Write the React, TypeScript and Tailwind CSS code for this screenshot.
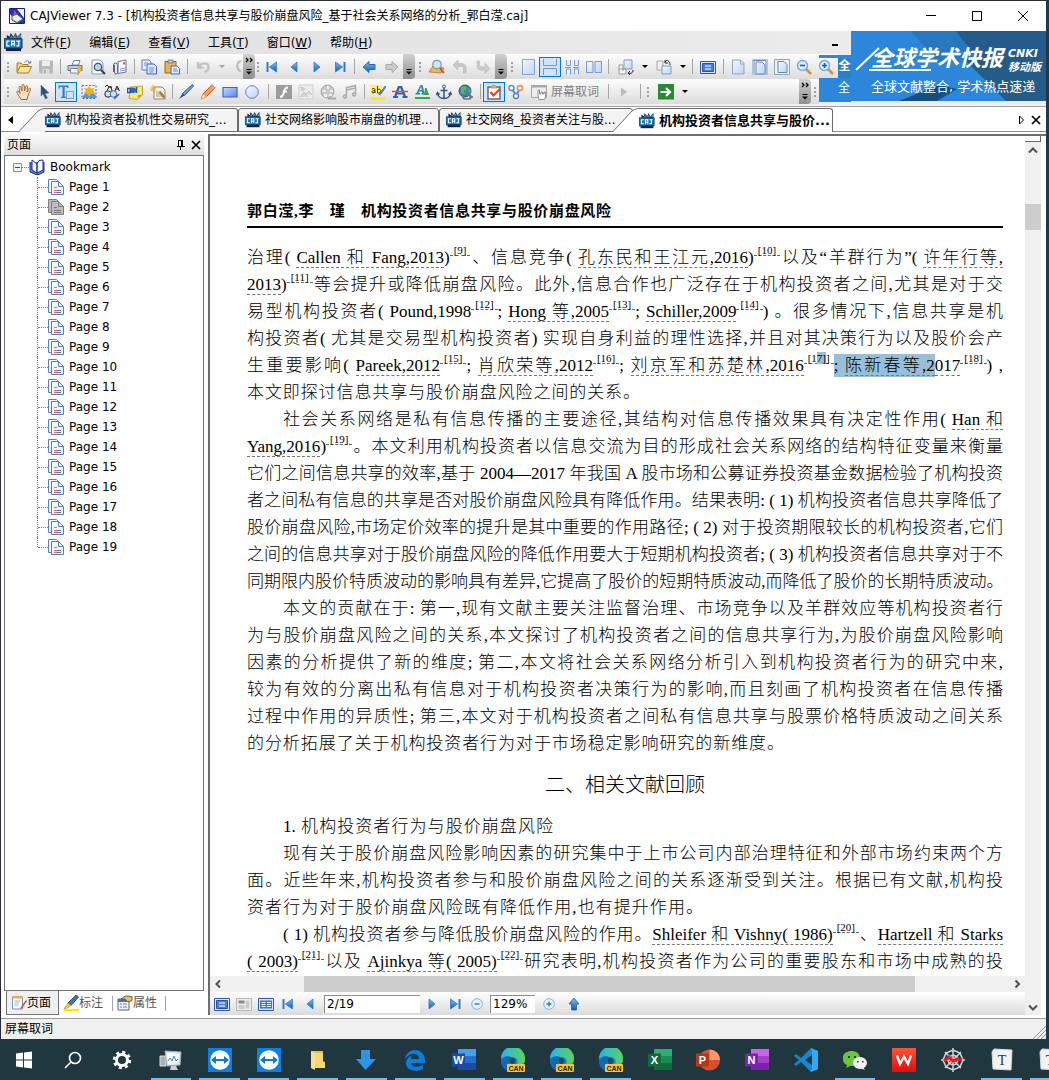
import React, { ReactNode } from "react";

const uiFont = "font-['DejaVu_Sans','Noto_Sans_CJK_SC',sans-serif]";

/* ---------- icon drawings, 16 x 16 grid ---------- */

const art: Record<string, ReactNode> = {
  open: (
    <>
      <path d="M1 13V4h4l1.500 1.500H12V8" fill="#f3cf73" stroke="#a87a2a" />
      <path d="M1 14 4 7.500h11.500L12.500 14z" fill="#fbe39a" stroke="#a87a2a" />
      <path d="M8.500 3.500C10 1 13 1.500 14 4M12 3.500l2.200 1 .9-2.300" fill="none" stroke="#5b7fae" />
    </>
  ),
  save: (
    <>
      <path d="M1 1.500h14v13H2.500L1 13z" fill="#b9b9b9" />
      <path d="M4 2h8v5H4z" fill="#eee" />
      <path d="M4.500 10h7v4.500h-7z" fill="#dcdcdc" />
      <path d="M6 11h2v3H6z" fill="#aaa" />
    </>
  ),
  print: (
    <>
      <path d="M5 6 7 1.500h6L11.500 6z" fill="#fff" stroke="#6c83ad" />
      <path d="M1 6.500h14v5H1z" fill="#c5cbd9" stroke="#65718b" />
      <path d="M3.500 9.500h8V14h-8z" fill="#f4f7fc" stroke="#7f8ba5" />
      <path d="m13 7-3 5h2l-1.500 4L15 10.500h-2.200L15 7z" fill="#ffce33" stroke="#b8861a" strokeWidth=".6" />
    </>
  ),
  preview: (
    <>
      <path d="M2 1h8l3 3v11H2z" fill="#f7faff" stroke="#8b9cb9" />
      <circle cx="8" cy="8" r="3.700" fill="#b5d6ee" stroke="#435069" strokeWidth="1.300" />
      <path d="m11 11 4 4" stroke="#383f4d" strokeWidth="2.200" />
    </>
  ),
  mail: (
    <>
      <path d="M1.500 13V6a2 2 0 0 1 4 0v7.500a1.500 1.500 0 0 1-3 0V6" fill="none" stroke="#59647b" />
      <path d="M6 2.500 14 1v12l-8 1.500z" fill="#f4f7fb" stroke="#66799c" />
      <path d="m8 10 6.500-1M8 12l6-1" stroke="#8da0c0" />
      <path d="M11 3h2v2.500h-2z" fill="#e06a4d" />
    </>
  ),
  copy: (
    <>
      <path d="M1 1h7l2 2v8H1z" fill="#e9f1ff" stroke="#5b7ac4" />
      <path d="M6 5h7l2.500 2.500V15H6z" fill="#dce8ff" stroke="#3c62bd" />
      <path d="M3 4h4M3 6h2M8 9h5M8 11h5M8 13h4" stroke="#6a8ad2" />
    </>
  ),
  paste: (
    <>
      <path d="M1 2.500h11V14H1z" fill="#e6b455" stroke="#93682a" />
      <path d="M4 1h5v3H4z" fill="#c4c7cf" stroke="#666" strokeWidth=".7" />
      <path d="M7 7h6l2.500 2.500V15H7z" fill="#e2ecff" stroke="#4a69ae" />
      <path d="M9 10h4M9 12h5" stroke="#6a8ad2" />
    </>
  ),
  undo: <path d="M2 3v5.500h5.500M2.500 8C5 3.500 12 3 12.500 7.500 13 10 11 12 8.500 13" fill="none" stroke="#c2c2c2" strokeWidth="2.400" />,
  redoArc: <path d="M14 2C9 3 9 10 14 12.500" fill="none" stroke="#b8b8b8" strokeWidth="2" />,
  first: (
    <>
      <path d="M2.500 3h2v10h-2z" fill="#2f7bd0" />
      <path d="M12.500 3v10L5.500 8z" fill="url(#blue)" stroke="#2f78cc" strokeWidth=".8" />
    </>
  ),
  prev: <path d="M11 3v10L5 8z" fill="url(#blue)" stroke="#2f78cc" strokeWidth=".8" />,
  next: <path d="M5 3v10l6-5z" fill="url(#blue)" stroke="#2f78cc" strokeWidth=".8" />,
  last: (
    <>
      <path d="M11.500 3h2v10h-2z" fill="#2f7bd0" />
      <path d="M3.500 3v10l7-5z" fill="url(#blue)" stroke="#2f78cc" strokeWidth=".8" />
    </>
  ),
  back: <path d="M8 2.500v3h6v5H8v3L2 8z" fill="url(#blue)" stroke="#2767b7" />,
  forward: <path d="M8 2.500v3H2v5h6v3L14 8z" fill="#ccc" stroke="#aaa" />,
  up: <path d="M8 2 3 8h2.500v6h5V8H13z" fill="url(#blue)" stroke="#1e5cac" strokeWidth=".8" />,
  search: (
    <>
      <path d="M0 13 4 7l11 2-3 5z" fill="#f2b64b" stroke="#a66c20" strokeWidth=".7" />
      <circle cx="8" cy="5.500" r="4.200" fill="#cfe8f8" stroke="#7f9cc0" strokeWidth="1.300" />
      <path d="m11 9 4 5" stroke="#d4492d" strokeWidth="2" />
    </>
  ),
  turnLeft: <path d="M6 1v3.500h3.500A4.500 4.500 0 0 1 14 9v5h-2.500V9.500a2 2 0 0 0-2-2H6V11L1 6z" fill="#c9c9c9" stroke="#adadad" strokeWidth=".5" />,
  turnRight: <path d="M2 2h2.500v4a2 2 0 0 0 2 2H10V4.500l5 5-5 5V11H6A4 4 0 0 1 2 7z" fill="#cdcdcd" stroke="#adadad" strokeWidth=".5" />,
  onePage: <path d="M2.500.5h12v15h-12z" fill="url(#pane)" stroke="#88a4d2" />,
  rows: (
    <>
      <path d="M2 0h12v6H2zM2 10h12v6H2z" fill="#d3e3fa" />
      <path d="M1.500 0v6.500h13V0M1.500 16V9.500h13V16" fill="none" stroke="#7897cb" />
    </>
  ),
  four: (
    <>
      <path d="M2 1h5v6H2zM10 1h5v6h-5zM2 9.500h5v6H2zM10 9.500h5v6h-5z" fill="#e7effb" />
      <path d="M2.500 1v5.500h4V1M10.500 1v5.500h4V1M2.500 15.500v-5.500h4v5.500M10.500 15.500v-5.500h4v5.500M1 8.500h6M9 8.500h6" fill="none" stroke="#7d9bce" />
    </>
  ),
  two: <path d="M.5 2.500h6.500v11H.5zM9 2.500h6.500v11H9z" fill="url(#pane)" stroke="#7d9bce" />,
  rotateA: (
    <>
      <path d="M6 1h8v9H6z" fill="url(#pane)" stroke="#7d9bce" />
      <path d="M1 10V6h4v6M1 10h7v5H1z" fill="#f4f4f4" stroke="#999" />
      <path d="M15 11c0 3-2 4-5 3m2-2-2 2 2 2" fill="none" stroke="#222" />
    </>
  ),
  rotateB: (
    <>
      <path d="M1 2h6v9H1z" fill="#eee" stroke="#aaa" />
      <path d="M6 7h9v8H6z" fill="url(#pane)" stroke="#7d9bce" />
      <path d="M9 3c2-3 5-1 5 3M9 1v3h3" fill="none" stroke="#222" />
    </>
  ),
  screen: (
    <>
      <path d="M.5 2.500h15v12H.5z" fill="#dce7f8" stroke="#38569b" />
      <path d="M2.500 4.500h11v8h-11z" fill="#4c80df" stroke="#2b51a6" />
      <path d="M5 7h6M5 10h6" stroke="#fff" />
    </>
  ),
  screenGray: (
    <>
      <path d="M.5 2.500h15v12H.5z" fill="#eee" stroke="#b5b5b5" />
      <path d="M2.500 4.500h6v3h-6z" fill="#888" />
      <path d="M9.500 4.500h4v8h-4zM2.500 9h6v4h-6z" fill="#ccc" />
    </>
  ),
  screenTwo: (
    <>
      <path d="M.5 2.500h15v12H.5z" fill="#dce7f8" stroke="#38569b" />
      <path d="M2 4.500h12v8H2z" fill="#3f70d2" />
      <path d="M3.500 6.500h4M3.500 8.500h4M3.500 10.500h4M9 6.500h4M9 8.500h4M9 10.500h4" stroke="#fff" />
    </>
  ),
  doc: <path d="M2.500 1h8l3.500 3.500V15H2.500zM10.500 1v4H14" fill="url(#pane)" stroke="#8aa5d0" />,
  docFrame: (
    <>
      <path d="M.5.5h15v15H.5z" fill="#eef3fb" stroke="#b6c0d2" />
      <path d="M4 3h6l3 3v9H4zM2 1.500h12M2 1v14M14 1v14" fill="url(#pane)" stroke="#6b8bc2" />
    </>
  ),
  docFit: (
    <>
      <path d="M.5.500h15v15H.5z" fill="#edf2f7" stroke="#8da5c3" />
      <path d="M4 2.500h6l3 3v8H4z" fill="url(#pane)" stroke="#638c9c" />
    </>
  ),
  zoomOut: (
    <>
      <path d="m10 10 5 5" stroke="#de8d3a" strokeWidth="2.600" />
      <circle cx="6.500" cy="6.500" r="5" fill="#d6f0fb" stroke="#75a5dc" strokeWidth="1.400" />
      <path d="M4 6.500h5" stroke="#1b58b8" strokeWidth="1.600" />
    </>
  ),
  zoomIn: (
    <>
      <path d="m10 10 5 5" stroke="#de8d3a" strokeWidth="2.600" />
      <circle cx="6.500" cy="6.500" r="5" fill="#d6f0fb" stroke="#75a5dc" strokeWidth="1.400" />
      <path d="M4 6.500h5M6.500 4v5" stroke="#1b58b8" strokeWidth="1.600" />
    </>
  ),
  hand: (
    <path
      d="M5 15.500C3 12 1.500 10 .8 8c0-1.500 1.500-1.200 2.200 0l1 1.500L3 3.500C3 2 4.700 2 5 3.300L6 7V1.800C6-.1 8-.1 8.200 1.800L8.500 7l1.200-4.500c.5-1.500 2-1 1.800.5L11 8l1.800-3.300c1-1.200 2.200-.3 1.600 1.100L12 12l-1 3.500z"
      fill="#fbe0c0"
      stroke="#a5673a"
    />
  ),
  pointer: <path d="m4 1 8 8-4 .5 2.500 4.500-2 1-2.500-5L4 12z" fill="#2b5579" stroke="#4b779d" strokeWidth=".5" />,
  textSelect: (
    <>
      <path d="M.5 1.500h10V4H9.500l-.5-1H6.700v9.500l1.300.5v1H3v-1l1.500-.5V3H2l-.5 1.500h-1z" fill="#3c7bd0" />
      <path d="M8.500 7.500h7v7h-7z" fill="none" stroke="#2759a5" strokeDasharray="1 1" />
    </>
  ),
  picture: (
    <>
      <path d="M1 1.500h14v13H1z" fill="none" stroke="#3b70c1" strokeDasharray="2 1.500" />
      <path d="M2 12 6 7l3 3 3-2 3 4v2H2z" fill="#4a9ed4" />
      <path d="m8 2 1.500 2.500L13 4l-1 3 2 2.500-4 .5-2 3-1.500-3-4-.500L5 7 3 4l3.500.5z" fill="#f8ac22" />
    </>
  ),
  binoculars: (
    <>
      <circle cx="4" cy="10" r="3.200" fill="#cde3f3" stroke="#222" />
      <circle cx="9.500" cy="10" r="3.200" fill="#cde3f3" stroke="#4a6fb0" />
      <path d="M3 6.500 5 3h2l1 4M1 3l2-2 2 2h3M11 7l2-5 2.500 5M12 5h3" fill="none" stroke="#222" />
      <path d="m10 15 5-5" stroke="#2d5fb0" strokeWidth="1.500" />
    </>
  ),
  note: (
    <>
      <path d="M3 3 15.500 2v9l-5 4.500-8.500-1z" fill="#ffe872" stroke="#ae8b25" strokeWidth=".7" />
      <path d="m10.500 15 .5-4 4.500-.3z" fill="#caa32f" />
      <path d="M.5 4.500h3v4h-3zM3.500 6h4M9.500 3v6" fill="none" stroke="#2357ae" strokeWidth="1.500" />
      <path d="M4 3.500h3l2 1.500v3L7 9H4z" fill="#2866c0" />
    </>
  ),
  sheet: (
    <>
      <path d="M4 3h8l3 3v9H4z" fill="#f7f1e4" stroke="#8d8576" />
      <path d="M6 8h6M6 10h7M6 12h7" stroke="#af9c79" />
      <path d="M0 5h6M3 1v7M1 2.500l5 5M5 2 1 7" stroke="#f6aa1e" />
      <path d="m10 7 5 5-1 3-5-6z" fill="#b3743f" />
    </>
  ),
  pen: (
    <>
      <path d="m14.500.5 1 1.500-9 9.500-2-2z" fill="#6aabf5" stroke="#1d4fae" />
      <path d="m4.500 9.500 2 2L1 15z" fill="#264c90" />
    </>
  ),
  pencil: (
    <>
      <path d="m12 .8 3 3-9 9-4.500 2L3 10z" fill="#f4a05c" stroke="#b45420" />
      <path d="m3 10 3 3-4.500 2z" fill="#ffdfb0" />
      <path d="m12 1 3 3-1.500 1.500-3-3z" fill="#dfa393" />
    </>
  ),
  rectangle: <path d="M1 3.500h14v9.500H1z" fill="url(#pale)" stroke="#3c65d0" strokeWidth="1.200" />,
  circle: <circle cx="8" cy="8" r="6.300" fill="url(#pane)" stroke="#5d7ee3" />,
  flash: (
    <>
      <path d="M0 1h16v14H0z" fill="#9d9d9d" />
      <path d="M12 3.500C8 3.500 8.500 7 7.500 9.500 7 11.500 6 13 4 13M7.500 7.500H11" fill="none" stroke="#fff" strokeWidth="2" />
    </>
  ),
  image: (
    <>
      <path d="M1 1h14v14H1z" fill="#ececec" stroke="#cfcfcf" />
      <path d="m2 13 4-5 4 5M8 10l3-3 3 4M3 3l4 2-3 2z" fill="#d5d5d5" stroke="#c5c5c5" />
    </>
  ),
  film: (
    <>
      <circle cx="7.500" cy="7.500" r="6.500" fill="#c7c7c7" stroke="#a5a5a5" />
      <path d="M7 2h2v3H7zM2.500 6h3v2h-3zM10 6h3v2h-3zM4 10h3v3H4zM9 10h3v2H9z" fill="#eee" />
      <path d="M8 14.500h8" stroke="#aaa" strokeWidth="2" />
    </>
  ),
  music: (
    <path d="M4.500 12V3.500l9-2v9M4.500 6l9-2M1.500 12.500a1.500 1.500 0 1 0 3 0 1.500 1.500 0 1 0-3 0M10.500 10.500a1.500 1.500 0 1 0 3 0 1.500 1.500 0 1 0-3 0" fill="none" stroke="#aaa" strokeWidth="1.500" />
  ),
  highlight: (
    <>
      <path d="M0 1h12v9H0z" fill="#fff26c" />
      <path d="M.5 13h15v3H.5z" fill="#ffee00" />
      <path d="M2 5c2-1 3-.5 3 1v3M5 7C2 6 1 8.500 3 9l2-1M7.500 2v7M7.500 6c2-2 4 0 3 2s-2 1-3 1" fill="none" stroke="#333" />
      <path d="m15 2-5 7-1 2 2-1 5-7z" fill="#6a8fc5" stroke="#34547d" strokeWidth=".6" />
    </>
  ),
  strikeA: (
    <>
      <path d="M6 2h4l4 10h1.500v2h-5v-2h1l-.6-1.500H5.200L4.600 12H6v2H1v-2h1.200zM6 8.500h4L8 3.500z" fill="#2669ad" />
      <path d="M0 7.500h16" stroke="#e44" strokeWidth="1.500" />
    </>
  ),
  underlineA: (
    <>
      <path d="M6.500 1h2l2 8h1v1.500H7.500V9h1L8 7.500H5L4.500 9H6v1.500H1.500V9h1zM5.500 6H8L7 3z" fill="#298aac" />
      <path d="M11 4h1.500L15 11H9.500l1-2z" fill="#3b9e53" />
      <path d="M1 14h15" stroke="#2bad43" strokeWidth="2" />
    </>
  ),
  anchor: (
    <>
      <path d="M8 4v10M4.500 6.500h7M1.500 9c.5 3.500 3 5.500 6.500 5.500s6-2 6.500-5.500M.5 11l1-2.500 2 2M12.500 10.500l2-2 1 2.500" fill="none" stroke="#33597f" strokeWidth="1.500" />
      <circle cx="8" cy="2.500" r="1.500" fill="none" stroke="#33597f" />
    </>
  ),
  globe: (
    <>
      <circle cx="7" cy="7" r="6" fill="#3784c1" stroke="#31536e" />
      <path d="m3 3 4-1 2 2-3 3 1 4-4-2zM10 5l3 1-1 4z" fill="#69b54d" />
      <path d="M7 11h4a2 2 0 0 1 0 4H7a2 2 0 0 1 0-4M11 13h4" fill="none" stroke="#64717f" strokeWidth="1.500" />
    </>
  ),
  clipboard: (
    <>
      <path d="M2 3h12v12H2z" fill="#fff" stroke="#6c6486" strokeWidth="1.500" />
      <path d="M5 4c0-4 6-4 6 0z" fill="#f3b73d" stroke="#a2762b" strokeWidth=".6" />
      <path d="m4.500 8 3 3.500L14 5" fill="none" stroke="#d9421f" strokeWidth="2.200" />
    </>
  ),
  people: (
    <>
      <path d="m4 5 4 6 4-6" fill="none" stroke="#4a84cc" strokeWidth="2" />
      <circle cx="3.500" cy="4" r="2.500" fill="#fff" stroke="#648bd3" strokeWidth="1.500" />
      <circle cx="12" cy="4" r="2.500" fill="#fff" stroke="#e28a4c" strokeWidth="1.500" />
      <circle cx="8" cy="12" r="2.500" fill="#fff" stroke="#5688d4" strokeWidth="1.500" />
    </>
  ),
  grab: (
    <>
      <path d="M.5 1.500h15v12H.5z" fill="#eee" stroke="#a6a6a6" />
      <path d="M.5 2.500h15" stroke="#a6a6a6" strokeWidth="2" />
      <path d="M7 12V6h1.500v4H10V8h1.500v2H13V8h1.500v5l-1 2.500H8z" fill="#fff" stroke="#777" strokeWidth=".8" />
    </>
  ),
  playGray: <path d="M5 3.500v9l6-4.500z" fill="#bbb" />,
  go: (
    <>
      <path d="M0 0h16v15.500H0z" fill="#278b2f" />
      <path d="M2.500 8h9M8 4l4 4-4 4" fill="none" stroke="#fff" strokeWidth="2.200" />
    </>
  ),
  minus: (
    <>
      <circle cx="8" cy="8" r="5.300" fill="#e1f3fc" stroke="#87b4dc" />
      <path d="M5.500 8h5" stroke="#3f6eb6" strokeWidth="1.300" />
    </>
  ),
  plus: (
    <>
      <circle cx="8" cy="8" r="5.300" fill="#e1f3fc" stroke="#87b4dc" />
      <path d="M5.500 8h5M8 5.500v5" stroke="#3f6eb6" strokeWidth="1.300" />
    </>
  ),
  tabPage: (
    <>
      <path d="M1.500 2h10v12h-10z" fill="#f8fbff" stroke="#7696b8" />
      <path d="M1.500 1h10v2.500h-10z" fill="#efab4a" />
      <path d="M3.500 6h6M3.500 8h5M3.500 10h4" stroke="#a8b6c8" />
      <path d="m15 5-5 7-1 2.500 2-1.500 5-7z" fill="#d83e2f" />
    </>
  ),
  tabMark: (
    <>
      <path d="m13 0 2.500 2L8 10.500 5 8z" fill="#4873ae" stroke="#324d77" />
      <path d="m5 8 3 2.500-5 3-2 .5z" fill="#f8c530" stroke="#bd8a1c" strokeWidth=".7" />
      <path d="M1 15h15" stroke="#ffe500" strokeWidth="2.300" />
    </>
  ),
  tabProps: (
    <>
      <path d="M1 4h11v11H1z" fill="#eef4fc" stroke="#4a6794" />
      <path d="M1 5.500h11" stroke="#4a72b5" strokeWidth="3" />
      <path d="M3 9h2M6 9h4M3 12h2M6 12h4" stroke="#667ea4" />
      <path d="m4 4 4-3 7 .5v4L11 7 8 4z" fill="#e7c26d" stroke="#776129" />
    </>
  ),
};

function Icon({ name, className = "size-4" }: { name: string; className?: string }) {
  return (
    <svg viewBox="0 0 16 16" className={`${className} shrink-0`} aria-hidden="true">
      {art[name]}
    </svg>
  );
}

function CajLogo({ className }: { className: string }) {
  return (
    <svg viewBox="0 0 20 20" className={`${className} shrink-0`} aria-hidden="true">
      <path d="M3 6V2l3 2 1-4 3 4 2-4 2 4 4-4v7z" fill="#16203c" />
      <path d="m5 6 3-4 1 3 4-4v4l5-4v4z" fill="#4d84c4" />
      <path d="M2 14h16v5H2z" fill="#16203c" />
      <path d="M0 6h19v10H0z" fill="#1878a8" stroke="#123454" />
      <path d="M6 8.500H3v5h3M8 14v-5.500h3V14M8 11.500h3M13 8.500h4M15.500 8.500v5H13" fill="none" stroke="#fff" strokeWidth="1.300" />
    </svg>
  );
}

/* ---------- toolbar parts ---------- */

function Tool({ icon, w = "w-[22px]", label, active = false }: { icon: string; w?: string; label: string; active?: boolean }) {
  return (
    <button
      type="button"
      aria-label={label}
      className={`${w} flex h-5 shrink-0 items-center justify-center overflow-hidden ${active ? "bg-[#cde6f7] outline outline-1 -outline-offset-1 outline-[#0078d7]" : ""}`}
    >
      <Icon name={icon} />
    </button>
  );
}

const Sep = ({ w = "w-[6px]" }: { w?: string }) => (
  <span className={`${w} flex shrink-0 items-center justify-center`}>
    <span className="h-[15px] w-px bg-[#a5a5a5]" />
  </span>
);

const Grip = ({ w = "w-2" }: { w?: string }) => (
  <span className={`${w} flex shrink-0 flex-col items-center gap-[2px]`}>
    {[0, 1, 2].map((i) => (
      <span key={i} className="size-[2px] bg-[#9f9f9f]" />
    ))}
  </span>
);

const Caret = ({ w = "w-2", color = "border-t-black" }: { w?: string; color?: string }) => (
  <button type="button" aria-label="更多" className={`${w} flex shrink-0 justify-center`}>
    <span className={`border-x-[3px] border-t-[3px] border-x-transparent ${color}`} />
  </button>
);

function Overflow({ chevrons = false }: { chevrons?: boolean }) {
  return (
    <button type="button" aria-label="工具栏选项" className="flex h-[25px] w-3 shrink-0 flex-col items-center justify-end rounded-r-sm bg-linear-to-b from-[#d2d2d2] to-[#8f8f8f] pb-1">
      <svg viewBox="0 0 12 20" className="h-5 w-3">
        {chevrons && <path d="m3 3 2 2-2 2M7 3l2 2-2 2" fill="none" stroke="#000" strokeWidth="1.300" />}
        <path d="M3.500 14.500h5" stroke="#000" />
        <path d="M3 16.500h6l-3 3z" fill="#000" />
      </svg>
    </button>
  );
}

const barRow = "flex h-[25px] items-center bg-linear-to-b from-[#fdfdfd] to-[#dcdcdc]";

function Toolbars() {
  return (
    <div className="shrink-0 bg-[#ededed] pl-[3px]">
      <div className={`${barRow} w-[834px]`}>
        <Grip />
        <Tool icon="open" w="w-[23px]" label="打开" />
        <Tool icon="save" label="保存" />
        <Sep />
        <Tool icon="print" w="w-6" label="打印" />
        <Tool icon="preview" label="打印预览" />
        <Tool icon="mail" label="发送" />
        <Sep />
        <Tool icon="copy" w="w-6" label="复制" />
        <Tool icon="paste" label="粘贴" />
        <Sep w="w-2" />
        <Tool icon="undo" w="w-[26px]" label="撤销" />
        <Caret w="w-[10px]" color="border-t-[#a0a0a0]" />
        <Tool icon="redoArc" w="w-4" label="重做" />
        <Overflow chevrons />
        <Grip w="w-[6px]" />
        <Tool icon="first" label="首页" />
        <Tool icon="prev" label="上一页" />
        <Tool icon="next" w="w-6" label="下一页" />
        <Tool icon="last" label="末页" />
        <Sep />
        <Tool icon="back" w="w-6" label="后退" />
        <Tool icon="forward" label="前进" />
        <Overflow />
        <Grip w="w-[10px]" />
        <Tool icon="search" w="w-6" label="搜索" />
        <Tool icon="turnLeft" label="向左" />
        <Tool icon="turnRight" w="w-6" label="向右" />
        <Overflow />
        <Grip w="w-[10px]" />
        <Tool icon="onePage" label="单页" />
        <Tool icon="rows" label="连续" active />
        <Tool icon="four" label="连续对开" />
        <Tool icon="two" label="对开" />
        <Sep />
        <Tool icon="rotateA" w="w-[30px]" label="旋转" />
        <Caret />
        <Tool icon="rotateB" w="w-[30px]" label="旋转全部" />
        <Caret />
        <Sep w="w-[10px]" />
        <Tool icon="screen" label="全屏" />
        <Sep w="w-2" />
        <Tool icon="doc" label="实际大小" />
        <Tool icon="docFrame" label="适合宽度" />
        <Tool icon="docFit" label="适合页面" />
        <Tool icon="zoomOut" label="缩小" />
        <Tool icon="zoomIn" label="放大" />
      </div>
      <div className={`${barRow} w-[815px]`}>
        <Grip />
        <Tool icon="hand" w="w-[23px]" label="手形工具" />
        <Tool icon="pointer" w="w-5" label="选择" />
        <Tool icon="textSelect" label="选择文本" active />
        <Tool icon="picture" w="w-6" label="选择图像" />
        <Tool icon="binoculars" label="文字识别" />
        <Tool icon="note" w="w-[23px]" label="注释" />
        <Tool icon="sheet" w="w-[23px]" label="便笺" />
        <Sep />
        <Tool icon="pen" label="直线" />
        <Tool icon="pencil" label="曲线" />
        <Tool icon="rectangle" label="矩形" />
        <Tool icon="circle" label="椭圆" />
        <Sep w="w-[10px]" />
        <Tool icon="flash" label="动画" />
        <Tool icon="image" label="图片" />
        <Tool icon="film" label="视频" />
        <Tool icon="music" label="音频" />
        <Sep />
        <Tool icon="highlight" label="高亮" />
        <Tool icon="strikeA" label="删除线" />
        <Tool icon="underlineA" label="下划线" />
        <Tool icon="anchor" label="书签" />
        <Tool icon="globe" label="链接" />
        <Sep />
        <Tool icon="clipboard" label="审阅" active />
        <Tool icon="people" label="共享" />
        <button type="button" className="flex w-[76px] shrink-0 items-center gap-1 pl-1 text-xs whitespace-nowrap text-[#7e7e7e]">
          <Icon name="grab" />
          屏幕取词
        </button>
        <Sep w="w-[10px]" />
        <Tool icon="playGray" label="播放" />
        <Sep w="w-[10px]" />
        <Grip w="w-[6px]" />
        <Tool icon="go" w="w-[30px]" label="转到" />
        <Caret />
        <span className="flex-1" />
        <Overflow chevrons />
        <Grip />
      </div>
    </div>
  );
}

/* ---------- banner ---------- */

function BannerEdge() {
  return (
    <div className="absolute top-[54px] right-[195px] flex h-[47px] w-8 flex-col items-end text-xs text-white">
      <span className="h-[3px] w-full bg-[#2c86d9]" />
      <span className="h-5 w-[13px] bg-[#2a7fcd] text-center leading-4 font-bold">全</span>
      <span className="w-full flex-1 bg-[#2c86d9] pr-px text-right leading-5">全</span>
    </div>
  );
}

function Banner() {
  return (
    <a href="#mobile" className="absolute top-[30px] right-0 block h-[70px] w-[195px] overflow-hidden bg-[#2c86d9] text-white">
      <svg viewBox="0 0 195 70" className="absolute inset-0 size-full" aria-hidden="true">
        <path d="M85 0 155 70H195V0z" fill="#255b88" />
        <path d="M60 0h45l20 26-36 8z" fill="#2878bf" />
        <path d="m48 70 40-16 18 4-20 12z" fill="#184f83" />
        <path d="M5 39 28 17M18 39h62" stroke="#fff" strokeWidth="2" />
      </svg>
      <span className="relative flex pt-3 pl-[20px]">
        <span className="text-[22px] leading-8 font-bold whitespace-nowrap italic">全球学术快报</span>
        <span className="pt-1 pl-[5px] text-[11px] leading-[14px] font-bold whitespace-nowrap italic">
          CNKI
          <br />
          移动版
        </span>
      </span>
      <span className="relative block pl-5 text-[13px] leading-6 whitespace-nowrap">全球文献整合, 学术热点速递</span>
    </a>
  );
}

/* ---------- document tabs ---------- */

function DocTab({ title, slanted = false, active = false, w }: { title: string; slanted?: boolean; active?: boolean; w: string }) {
  const fill = active ? "#ffffff" : "#f3f3f3";
  return (
    <button type="button" role="tab" aria-selected={active} className={`${w} relative flex h-full shrink-0 ${active ? "z-10 -ml-5" : ""}`}>
      {slanted ? (
        <svg viewBox="0 0 26 24" className="h-6 w-[26px] shrink-0">
          <path d="M0 24 19 3Q22 .5 26 .5V24z" fill={fill} />
          <path d="M0 23.500 19 3Q22 .5 26 .5" fill="none" stroke="#6c6c6c" />
        </svg>
      ) : null}
      <span
        className={`flex h-6 min-w-0 flex-1 items-center gap-1 border-t border-r border-[#6c6c6c] whitespace-nowrap ${
          slanted ? "rounded-tr-[3px]" : "rounded-t-[3px] border-l pl-[6px]"
        } ${active ? "bg-white text-[13px] font-bold" : "border-b bg-[#f3f3f3] text-xs"}`}
      >
        <CajLogo className="size-4" />
        <span>{title}</span>
      </span>
    </button>
  );
}

/* ---------- page list ---------- */

function PageIcon({ visited }: { visited: boolean }) {
  const ink = visited ? "#7d7d7d" : "#5a7dbb";
  const paper = visited ? "#bdbdbd" : "#f1f6ff";
  return (
    <svg viewBox="0 0 16 16" className="size-4 shrink-0" aria-hidden="true">
      <path d="M.5.500h8l2 2v11H.5z" fill={paper} stroke={ink} />
      <path d="M3.500 2.500h7l5 5v8h-12z" fill={paper} stroke={ink} />
      <path d="M10.500 2.500v5h5" fill="none" stroke={ink} />
      <path d="M6 8.500h3M6 11.500h7M6 13.500h7" stroke={visited ? "#777" : "#5d6fb5"} />
      {!visited && <path d="M6 8.500h3M6 11.500h3M6 13.500h3" stroke="#e56a6a" />}
    </svg>
  );
}

function SidePanel() {
  const pages = Array.from({ length: 19 }, (_, i) => i + 1);
  return (
    <aside className="flex w-[203px] shrink-0 flex-col pl-[3px]">
      <header className="flex h-[21px] shrink-0 items-center bg-linear-to-b from-[#fafafa] to-[#dfdfdf] pr-[2px] pl-[3px] text-xs">
        <h2 className="flex-1">页面</h2>
        <button type="button" aria-label="固定" className="mr-[3px]">
          <svg viewBox="0 0 12 12" className="size-3">
            <path d="M3.500 1v6M3 1.500h5M7.500 1v6M6.500 1v6M2 7.500h8M5.500 8v3" fill="none" stroke="#000" />
          </svg>
        </button>
        <button type="button" aria-label="关闭">
          <svg viewBox="0 0 12 12" className="size-3">
            <path d="m2 2 8 8M10 2l-8 8" stroke="#000" strokeWidth="1.700" />
          </svg>
        </button>
      </header>
      <nav className="min-h-0 flex-1 overflow-hidden border border-[#747474] bg-white pt-px pl-2 text-xs">
        <div className="flex h-5 items-center">
          <svg viewBox="0 0 9 9" className="size-[9px] shrink-0">
            <path d="M.5.5h8v8h-8z" fill="#f4f4f4" stroke="#8c8c8c" />
            <path d="M2 4.500h5" stroke="#2c4a8e" />
          </svg>
          <span className="w-[7px] border-t border-dotted border-[#777]" />
          <svg viewBox="0 0 16 16" className="mr-[5px] size-4 shrink-0" aria-hidden="true">
            <path d="M1 3v10l6 2.500h3L15 13V3" fill="#5580df" stroke="#1c3083" />
            <path d="M3 1v10l5 3V5zM8 5l2-3.500 4-.5v10l-6 3z" fill="#f5f9ff" stroke="#1c3083" />
          </svg>
          Bookmark
        </div>
        <ul>
          {pages.map((n) => (
            <li key={n} className="flex h-5 items-center pl-6">
              <span className={`w-px self-start border-l border-dotted border-[#777] ${n === 19 ? "h-[10px]" : "h-5"}`} />
              <span className="w-[10px] border-t border-dotted border-[#777]" />
              <a href={`#page-${n}`} className="flex items-center gap-[5px]">
                <PageIcon visited={n === 2} />
                Page {n}
              </a>
            </li>
          ))}
        </ul>
      </nav>
      <div role="tablist" className="flex h-6 shrink-0 items-stretch text-xs text-[#555]">
        <button type="button" role="tab" aria-selected="true" className="ml-[2px] flex w-[53px] items-center border-r border-b border-l border-[#747474] bg-[#f0f0f0] pl-1 whitespace-nowrap text-black">
          <Icon name="tabPage" />
          <span>页面</span>
        </button>
        <button type="button" role="tab" aria-selected="false" className="flex w-[53px] items-center pl-1 whitespace-nowrap">
          <Icon name="tabMark" />
          标注
        </button>
        <Sep w="w-px" />
        <button type="button" role="tab" aria-selected="false" className="flex w-[52px] items-center pl-1 whitespace-nowrap">
          <Icon name="tabProps" />
          属性
        </button>
        <Sep w="w-px" />
      </div>
    </aside>
  );
}

/* ---------- article ---------- */

const Cite = ({ children }: { children: ReactNode }) => (
  <a href="#reference" className="border-b border-dashed border-[#777]">
    {children}
  </a>
);

const Ref = ({ n }: { n: ReactNode }) => (
  <a href="#note" className="inline-block h-3 border-b border-dashed border-[#666] px-1 align-[9px] text-[11px] leading-3 [text-align-last:left]">
    [{n}]
  </a>
);

function Line({ children, indent = false, w = "w-full" }: { children: ReactNode; indent?: boolean; w?: string }) {
  return <p className={`${w} h-[27px] whitespace-nowrap [text-align-last:justify] ${indent ? "pl-9" : ""}`}>{children}</p>;
}

function Article() {
  return (
    <article className="min-h-0 flex-1 overflow-hidden bg-white pt-[63px] pr-[22px] pl-[37px] font-['Liberation_Serif','Noto_Sans_CJK_SC',serif] text-[17px] leading-[27px] font-light text-black">
      <header className="mb-4 border-b-2 border-black pb-[3px]">
        <h1 className="w-[364px] text-[15px] leading-6 font-bold whitespace-nowrap [text-align-last:justify]">郭白滢,李　瑾　机构投资者信息共享与股价崩盘风险</h1>
      </header>
      <Line>治理( <Cite>Callen 和 Fang,2013</Cite>)<Ref n="9" />、信息竞争( <Cite>孔东民和王江元,2016</Cite>)<Ref n="10" />以及“羊群行为”( <Cite>许年行等,</Cite></Line>
      <Line><Cite>2013</Cite>)<Ref n="11" />等会提升或降低崩盘风险。此外,信息合作也广泛存在于机构投资者之间,尤其是对于交</Line>
      <Line>易型机构投资者( Pound,1998<Ref n="12" />; <Cite>Hong 等,2005</Cite><Ref n="13" />; <Cite>Schiller,2009</Cite><Ref n="14" />) 。很多情况下,信息共享是机</Line>
      <Line>构投资者( 尤其是交易型机构投资者) 实现自身利益的理性选择,并且对其决策行为以及股价会产</Line>
      <Line>
        生重要影响( <Cite>Pareek,2012</Cite><Ref n="15" />; <Cite>肖欣荣等,2012</Cite><Ref n="16" />; <Cite>刘京军和苏楚林,2016</Cite><Ref n={<>1<span className="bg-[#98bfd8]">7]</span></>} /><span className="bg-[#98bfd8] py-[2px]">; <Cite>陈新春等,2</Cite></span><Cite>017</Cite><Ref n="18" />) ,
      </Line>
      <Line w="w-[393px]">本文即探讨信息共享与股价崩盘风险之间的关系。</Line>
      <Line indent>社会关系网络是私有信息传播的主要途径,其结构对信息传播效果具有决定性作用( <Cite>Han 和</Cite></Line>
      <Line><Cite>Yang,2016</Cite>)<Ref n="19" />。本文利用机构投资者以信息交流为目的形成社会关系网络的结构特征变量来衡量</Line>
      <Line>它们之间信息共享的效率,基于 2004—2017 年我国 A 股市场和公募证券投资基金数据检验了机构投资</Line>
      <Line>者之间私有信息的共享是否对股价崩盘风险具有降低作用。结果表明: ( 1) 机构投资者信息共享降低了</Line>
      <Line>股价崩盘风险,市场定价效率的提升是其中重要的作用路径; ( 2) 对于投资期限较长的机构投资者,它们</Line>
      <Line>之间的信息共享对于股价崩盘风险的降低作用要大于短期机构投资者; ( 3) 机构投资者信息共享对于不</Line>
      <Line>同期限内股价特质波动的影响具有差异,它提高了股价的短期特质波动,而降低了股价的长期特质波动。</Line>
      <Line indent>本文的贡献在于: 第一,现有文献主要关注监督治理、市场竞争以及羊群效应等机构投资者行</Line>
      <Line>为与股价崩盘风险之间的关系,本文探讨了机构投资者之间的信息共享行为,为股价崩盘风险影响</Line>
      <Line>因素的分析提供了新的维度; 第二,本文将社会关系网络分析引入到机构投资者行为的研究中来,</Line>
      <Line>较为有效的分离出私有信息对于机构投资者决策行为的影响,而且刻画了机构投资者在信息传播</Line>
      <Line>过程中作用的异质性; 第三,本文对于机构投资者之间私有信息共享与股票价格特质波动之间关系</Line>
      <Line w="w-[537px]">的分析拓展了关于机构投资者行为对于市场稳定影响研究的新维度。</Line>
      <h2 className="py-[14px] text-center text-xl leading-7">二、相关文献回顾</h2>
      <Line indent w="w-[306px]">1. 机构投资者行为与股价崩盘风险</Line>
      <Line indent>现有关于股价崩盘风险影响因素的研究集中于上市公司内部治理特征和外部市场约束两个方</Line>
      <Line>面。近些年来,机构投资者参与和股价崩盘风险之间的关系逐渐受到关注。根据已有文献,机构投</Line>
      <Line w="w-[456px]">资者行为对于股价崩盘风险既有降低作用,也有提升作用。</Line>
      <Line indent>( 1) 机构投资者参与降低股价崩盘风险的作用。<Cite>Shleifer 和 Vishny( 1986)</Cite><Ref n="20" />、<Cite>Hartzell 和 Starks</Cite></Line>
      <Line><Cite>( 2003)</Cite><Ref n="21" />以及 <Cite>Ajinkya 等( 2005)</Cite><Ref n="22" />研究表明,机构投资者作为公司的重要股东和市场中成熟的投</Line>
    </article>
  );
}

const chevron: Record<string, string> = {
  up: "M2 8.500 6 4.500l4 4",
  down: "M2 4.500 6 8.500l4-4",
  left: "M8 2.500 4.500 6 8 9.500",
  right: "M4.500 2.500 8 6 4.500 9.500",
};

const ScrollArrow = ({ dir, label }: { dir: string; label: string }) => (
  <button type="button" aria-label={label} className="flex size-4 shrink-0 items-center justify-center">
    <svg viewBox="0 0 12 12" className="size-3">
      <path d={chevron[dir]} fill="none" stroke="#505050" strokeWidth="2" />
    </svg>
  </button>
);

function Viewer() {
  return (
    <main className="ml-1 flex min-w-0 flex-1 border-t-2 border-l-2 border-[#6e6e6e]">
      <div className="flex min-w-0 flex-1 flex-col">
        <Article />
        <div className="flex h-4 shrink-0 items-center bg-[#f0f0f0]">
          <ScrollArrow dir="left" label="向左滚动" />
          <div className="flex h-full flex-1">
            <span className="w-[10%]" />
            <span className="w-[78%] bg-[#cdcdcd]" />
          </div>
          <ScrollArrow dir="right" label="向右滚动" />
        </div>
        <div className="flex h-[23px] shrink-0 items-center bg-linear-to-b from-white to-[#dcdcdc] pl-px text-xs">
          <Tool icon="screen" label="单页视图" />
          <Tool icon="screenGray" label="混合视图" />
          <Tool icon="screenTwo" label="双页视图" />
          <Tool icon="first" label="首页" />
          <Tool icon="prev" label="上一页" />
          <input aria-label="页码" defaultValue="2/19" className="ml-[3px] h-[18px] w-24 border-t border-l border-[#8e8e8e] bg-white px-[2px]" />
          <Tool icon="next" w="w-6" label="下一页" />
          <Tool icon="last" label="末页" />
          <Tool icon="minus" label="缩小" />
          <input aria-label="缩放比例" defaultValue="129%" className="ml-[2px] h-[18px] w-[45px] border-t border-l border-[#8e8e8e] bg-white px-[2px]" />
          <Tool icon="plus" w="w-7" label="放大" />
          <Tool icon="up" label="返回" />
        </div>
      </div>
      <div className="flex w-4 shrink-0 flex-col bg-[#f0f0f0]">
        <span className="h-[6px] border-r border-b border-[#666] bg-white" />
        <ScrollArrow dir="up" label="向上滚动" />
        <div className="flex min-h-0 flex-1 flex-col">
          <span className="h-[46px]" />
          <span className="h-[26px] bg-[#cdcdcd]" />
        </div>
        <ScrollArrow dir="down" label="向下滚动" />
      </div>
      <span className="w-[5px] shrink-0 bg-white" />
    </main>
  );
}

/* ---------- taskbar ---------- */

const edge = (
  <>
    <circle cx="12" cy="12" r="12" fill="#1889c9" />
    <path d="M0 10A12 12 0 0 1 24 11c0 5-4 6-8 5 2-3 0-7-5-7C6 9 3 11 0 10z" fill="url(#edgeTop)" />
    <path d="M8 15c0 4 3 7 8 8C7 26 0 20 0 13c1-5 8-6 12-3-3 0-4 3-4 5z" fill="#1568b4" />
    <circle cx="11.500" cy="13" r="3" fill="#174b74" />
    <rect x="6" y="16" width="18" height="8" rx="1" fill="#fdc52d" />
    <text x="15" y="22.500" textAnchor="middle" fontSize="7" fontWeight="bold" fontFamily="Liberation Sans" fill="#222">
      CAN
    </text>
  </>
);

const teamViewer = (
  <>
    <path d="M0 0h24v24H0z" fill="#0c80e4" />
    <circle cx="12" cy="12" r="9.800" fill="#fff" />
    <path d="m3 12 5-4v3h8V8l5 4-5 4v-3H8v3z" fill="#1874d2" />
  </>
);

const office = (letter: string, dark: string, light: string, mid: string) => (
  <>
    <path d="M6 1h18v7H6z" fill={light} />
    <path d="M6 8h18v7H6z" fill={mid} />
    <path d="M6 15h18v7H6z" fill={dark} />
    <path d="M0 5.500h13v13H0z" fill={dark} />
    <text x="6.500" y="16" textAnchor="middle" fontSize="11" fontWeight="bold" fontFamily="Liberation Sans" fill="#fff">
      {letter}
    </text>
  </>
);

const tNote = (
  <>
    <path d="m2 4 2-3 18 1-1 20L3 21z" fill="#f2f2f2" stroke="#d5dadc" />
    <text x="12" y="17" textAnchor="middle" fontSize="14" fontFamily="Liberation Serif" fill="#333">
      T
    </text>
  </>
);

const apps: { name: string; open: boolean; art: ReactNode }[] = [
  { name: "开始", open: false, art: <path d="m4 5.500 7-1v7H4zM12 4.500l8-1v8h-8zM4 12.500h7v7l-7-1zM12 12.500h8v8l-8-1z" fill="#fff" /> },
  {
    name: "搜索",
    open: false,
    art: (
      <>
        <circle cx="14" cy="10" r="5.500" fill="none" stroke="#fff" strokeWidth="1.600" />
        <path d="m10 14-6 6" stroke="#fff" strokeWidth="1.600" />
      </>
    ),
  },
  {
    name: "设置",
    open: false,
    art: (
      <>
        <circle cx="12" cy="12" r="5.500" fill="none" stroke="#fff" strokeWidth="3" />
        <circle cx="12" cy="12" r="7.700" fill="none" stroke="#fff" strokeWidth="3" strokeDasharray="3.050 3" />
      </>
    ),
  },
  {
    name: "性能监视器",
    open: true,
    art: (
      <>
        <path d="M1 8h6v10H1z" fill="#a9b2b5" stroke="#dbe1e2" />
        <path d="m6 3 16 1-1 13-13 1z" fill="#e1e6e7" stroke="#a7adb0" />
        <path d="m8 5 12 1-1 9-10 1z" fill="#f7fcff" />
        <path d="m9 13 2-3 2 3 2-5 2 5 2-2" fill="none" stroke="#3d8db9" />
        <path d="M12 18h5l2 4h-8z" fill="#cbd0d2" />
      </>
    ),
  },
  { name: "TeamViewer", open: true, art: teamViewer },
  { name: "TeamViewer 会话", open: true, art: teamViewer },
  {
    name: "文件资源管理器",
    open: true,
    art: (
      <>
        <path d="M5 3h12v10l2 1v6H7z" fill="#e8bd50" />
        <path d="m5 3 4 2v17l-4-2z" fill="#f9e08d" />
        <path d="M9 5h8v9l2 1v5H9z" fill="#f6d675" />
      </>
    ),
  },
  { name: "下载", open: true, art: <path d="M7 2h9v9h6L11.500 22 2 11h5z" fill="#2e94e8" /> },
  { name: "Edge", open: true, art: <path d="M2 11C4-1 21-1 22 12v3H8c0 4 7 5 12 2v4c-8 4-18 1-17-7 1-4 4-6 7-7-2 1-2 3-2 4h8c0-7-9-7-14 0z" fill="#0a7edc" /> },
  { name: "Word", open: true, art: office("W", "#174da3", "#45a1e8", "#2371ce") },
  { name: "Edge Canary", open: true, art: edge },
  { name: "Edge Canary 2", open: true, art: edge },
  { name: "Edge Canary 3", open: true, art: edge },
  { name: "Excel", open: false, art: office("X", "#126b3a", "#2fae72", "#1d8b50") },
  {
    name: "PowerPoint",
    open: false,
    art: (
      <>
        <circle cx="13.500" cy="12" r="10.500" fill="#d65030" />
        <path d="M13.500 1.500A10.500 10.500 0 0 1 24 12H13.500z" fill="#ff9871" />
        <path d="M0 5.500h13v13H0z" fill="#b93619" />
        <text x="6.500" y="16" textAnchor="middle" fontSize="11" fontWeight="bold" fontFamily="Liberation Sans" fill="#fff">
          P
        </text>
      </>
    ),
  },
  { name: "OneNote", open: false, art: office("N", "#7924ac", "#cb65e8", "#a640c9") },
  {
    name: "VS Code",
    open: false,
    art: (
      <>
        <path d="m17 0 7 3v18l-7 3L7 14l-5 4-2-2 5-4-5-4 2-2 5 4zM18 7l-7 5 7 5z" fill="#1687cf" />
        <path d="m17 0 7 3v18l-7 3 1-3V3z" fill="#2da9f5" />
      </>
    ),
  },
  {
    name: "微信",
    open: true,
    art: (
      <>
        <path d="M9 3c-12 0-11 12-5 14l-1 3 4-2c13 1 13-15 2-15z" fill="#6fc43d" />
        <ellipse cx="17" cy="15" rx="7" ry="6" fill="#eef2f2" />
        <path d="m20 19 2 3-5-2z" fill="#eef2f2" />
        <path d="M5 8h2v2H5zM11 8h2v2h-2zM14 13h1.500v1.500H14zM19 13h1.500v1.500H19z" fill="#24402b" />
      </>
    ),
  },
  {
    name: "WPS",
    open: false,
    art: (
      <>
        <path d="M0 0h24v24H0z" fill="url(#wps)" />
        <path d="m5 7.500 3 8.500L12 8.500l4 7.500 3-8.500" fill="none" stroke="#fff" strokeWidth="2.300" />
      </>
    ),
  },
  {
    name: "Spyder",
    open: false,
    art: (
      <>
        <path d="m12 2 7 3 3 7-3 7-7 3-7-3-3-7 3-7zM12 7l4 1.500L17 12l-1.500 4-3.500 1-4-1.500L7 12l1.500-3.500zM12 0v24M0 12h24M4 4l16 16M20 4 4 20" fill="none" stroke="#d3d6d7" strokeWidth="1.500" />
        <path d="m3 13 5-4 4 4 4-2 5 1" fill="none" stroke="#ed1717" strokeWidth="3" />
      </>
    ),
  },
  { name: "Typora", open: true, art: tNote },
  { name: "Typora 2", open: true, art: tNote },
];

function Taskbar() {
  return (
    <nav aria-label="任务栏" className="flex h-[41px] shrink-0 overflow-hidden bg-[#213740]">
      <div className="-mr-[26px] flex flex-1">
        {apps.map((app) => (
          <button key={app.name} type="button" aria-label={app.name} className="relative flex flex-1 items-center justify-center">
            <svg viewBox="0 0 24 24" className="size-6">
              {app.art}
            </svg>
            {app.open && <span className="absolute inset-x-1 bottom-0 h-[2px] bg-[#76b9ed]" />}
          </button>
        ))}
      </div>
    </nav>
  );
}

/* ---------- window ---------- */

const menus: [string, string][] = [
  ["文件", "F"],
  ["编辑", "E"],
  ["查看", "V"],
  ["工具", "T"],
  ["窗口", "W"],
  ["帮助", "H"],
];

export default function App() {
  return (
    <div className={`${uiFont} flex h-screen flex-col overflow-hidden bg-[#1d3a4c] text-xs text-black`}>
      <svg className="absolute size-0" aria-hidden="true">
        <defs>
          <linearGradient id="blue" x2="0" y2="1">
            <stop stopColor="#7ec0f2" />
            <stop offset="1" stopColor="#1358b4" />
          </linearGradient>
          <linearGradient id="pane" x2="1" y2="1">
            <stop stopColor="#f5f9ff" />
            <stop offset="1" stopColor="#bdd3f3" />
          </linearGradient>
          <linearGradient id="pale" x2="1" y2="1">
            <stop stopColor="#c8dcff" />
            <stop offset="1" stopColor="#5585ee" />
          </linearGradient>
          <linearGradient id="edgeTop">
            <stop stopColor="#27b4e8" />
            <stop offset="1" stopColor="#5ed15a" />
          </linearGradient>
          <linearGradient id="wps" x2="0" y2="1">
            <stop stopColor="#ff5237" />
            <stop offset="1" stopColor="#e00d0d" />
          </linearGradient>
        </defs>
      </svg>

      <div className="relative mr-[3px] flex min-h-0 flex-1 flex-col border-t border-l border-[#2a2c33] bg-[#f0f0f0]">
        <header className="flex h-[30px] shrink-0 items-center bg-white pl-2">
          <svg viewBox="0 0 16 16" className="mr-[5px] size-4 shrink-0" aria-hidden="true">
            <path d="M.5.500h15v15H.5z" fill="#f4f6ff" stroke="#0b1ca5" />
            <path d="M1 1h7l7 9v5H9L1 6z" fill="#2730b5" />
            <path d="m5 2 4 5-5 2z" fill="#e53a8b" />
            <path d="m3 8 5-2 6 5-6 4-5-3z" fill="#e9ede8" stroke="#555" />
            <path d="m4 12 4 2.500 6-3.500" fill="none" stroke="#1c9b55" />
          </svg>
          <h1 className="min-w-0 flex-1 truncate">CAJViewer 7.3 - [机构投资者信息共享与股价崩盘风险_基于社会关系网络的分析_郭白滢.caj]</h1>
          <div className="flex">
            {[
              ["最小化", "M1 5.500h10"],
              ["最大化", "M1.500 1.500h9v9h-9z"],
              ["关闭", "m1 1 10 10M11 1 1 11"],
            ].map(([label, d]) => (
              <button key={label} type="button" aria-label={label} className="flex h-7 w-[46px] items-center justify-center">
                <svg viewBox="0 0 12 12" className="size-3">
                  <path d={d} fill="none" stroke="#000" />
                </svg>
              </button>
            ))}
          </div>
        </header>

        <nav className="flex h-[23px] shrink-0 items-center gap-[18px] bg-linear-to-r from-[#e0e0e0] to-[#eeeeee] pl-[3px]">
          <CajLogo className="-mr-[10px] size-[19px]" />
          {menus.map(([label, key]) => (
            <button key={key} type="button" className="whitespace-nowrap">
              {label}(<span className="underline">{key}</span>)
            </button>
          ))}
          <span className="flex-1" />
          <button type="button" aria-label="最小化文档" className="mr-[193px]">
            <svg viewBox="0 0 24 12" className="h-3 w-6">
              <path d="M3 8h6" stroke="#000" strokeWidth="2" />
              <path d="M23.500 3v6" stroke="#000" />
            </svg>
          </button>
        </nav>

        <Toolbars />

        <BannerEdge />
        <Banner />

        <div role="tablist" className="mt-[2px] flex h-[26px] shrink-0 items-stretch border-t border-[#a0a0a0] bg-white pt-px shadow-[inset_0_-1px_0_#8c8c8c]">
          <button type="button" aria-label="向左滚动标签" className="flex w-[18px] items-center justify-center">
            <span className="border-y-4 border-r-[5px] border-y-transparent border-r-black" />
          </button>
          <DocTab w="w-[219px]" slanted title="机构投资者投机性交易研究_..." />
          <DocTab w="w-[201px]" title="社交网络影响股市崩盘的机理..." />
          <DocTab w="w-[194px]" title="社交网络_投资者关注与股..." />
          <DocTab w="w-[220px]" slanted active title="机构投资者信息共享与股价..." />
          <span className="flex-1" />
          <button type="button" aria-label="向右滚动标签">
            <svg viewBox="0 0 12 12" className="size-3">
              <path d="M4.500 2v8l4-4z" fill="none" stroke="#000" />
            </svg>
          </button>
          <button type="button" aria-label="关闭标签" className="mr-1 ml-[3px]">
            <svg viewBox="0 0 12 12" className="size-3">
              <path d="m2 2 8 8M10 2l-8 8" stroke="#000" strokeWidth="1.700" />
            </svg>
          </button>
        </div>

        <div className="flex min-h-0 flex-1 bg-white pt-[2px] pb-[3px]">
          <SidePanel />
          <Viewer />
        </div>

        <footer className="flex h-[21px] shrink-0 items-center border-t border-[#9b9b9b] bg-[#f0f0f0] pl-1">
          <span className="flex-1">屏幕取词</span>
          <svg viewBox="0 0 13 13" className="size-[13px] self-end">
            <path d="M0 13 13 0M4 13l9-9M8 13l5-5" stroke="#999" />
          </svg>
        </footer>
      </div>

      <Taskbar />
    </div>
  );
}
